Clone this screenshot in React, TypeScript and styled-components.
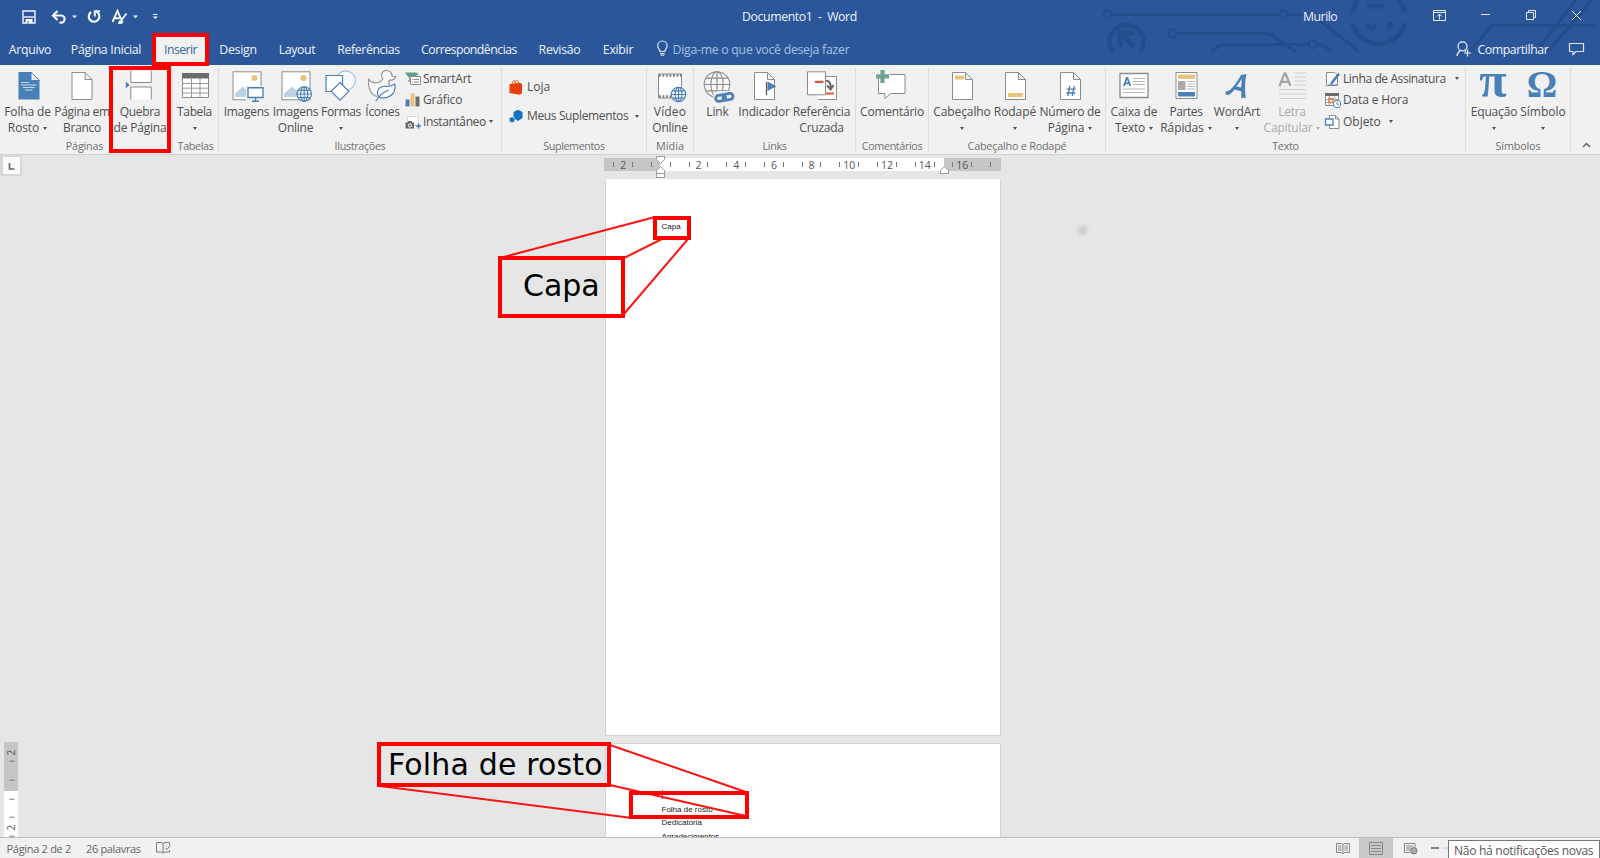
import React from "react";
import styled, { createGlobalStyle } from "styled-components";

const UI = `"Open Sans", "Noto Sans", sans-serif`;
const BLUE = "#2b579a";
const ACCENT = "#4a80b8";
const GRAY = "#8c8c8c";
const GOLD = "#e9c37c";
const RED = "#ff0000";

/* Letter spacing per caption, in px */
const tracking: Record<string, number> = {
  "Arquivo": -0.32, "Página Inicial": -0.31, "Inserir": -0.59, "Design": -0.29, "Layout": -0.41,
  "Referências": -0.4, "Correspondências": -0.52, "Revisão": -0.29, "Exibir": -0.29,
  "Diga-me o que você deseja fazer": -0.27, "Documento1 \u00a0-\u00a0 Word": -0.4, "Murilo": -0.5, "Compartilhar": -0.43,
  "Folha de": -0.15, "Rosto": -0.11, "Página em": -0.32, "Branco": -0.31, "Quebra": -0.34, "de Página": -0.21,
  "Tabela": -0.38, "Imagens": -0.26, "Online": -0.26, "Formas": -0.34, "Ícones": -0.31, "SmartArt": -0.25,
  "Gráfico": -0.15, "Instantâneo": -0.38, "Loja": 0.03, "Meus Suplementos": -0.37, "Vídeo": 0.16, "Link": -0.16,
  "Indicador": -0.18, "Referência": -0.21, "Cruzada": -0.26, "Comentário": -0.23, "Cabeçalho": -0.11, "Rodapé": -0.07,
  "Número de": -0.31, "Página": -0.19, "Caixa de": -0.08, "Texto": -0.26, "Partes": -0.45, "Rápidas": -0.12,
  "WordArt": -0.14, "Letra": -0.31, "Capitular": -0.23, "Linha de Assinatura": -0.4, "Data e Hora": -0.15,
  "Objeto": -0.02, "Equação": -0.15, "Símbolo": 0,
  "Páginas": -0.22, "Tabelas": -0.38, "Ilustrações": -0.35, "Suplementos": -0.44, "Mídia": 0.01, "Links": -0.4,
  "Comentários": -0.39, "Cabeçalho e Rodapé": -0.21, "Símbolos": -0.16,
  "Página 2 de 2": -0.3, "26 palavras": -0.34, "Não há notificações novas": -0.27,
};

const Global = createGlobalStyle`
  body { margin: 0; overflow: hidden; font-family: ${UI}; }
  svg { display: block; overflow: visible; flex: none; }
`;

const Screen = styled.div`
  position: relative;
  display: flex;
  flex-direction: column;
  width: 1600px;
  height: 858px;
  overflow: hidden;
  background: #e6e6e6;
`;

const Text = styled.span<{ $ls: number; $size?: number }>`
  font-size: ${(p) => p.$size ?? 12}px;
  letter-spacing: ${(p) => p.$ls}px;
  white-space: pre;
`;
const T = ({ children, size }: { children: string; size?: number }) => (
  <Text $ls={tracking[children] ?? 0} $size={size}>{children}</Text>
);

/* ---------- header ---------- */
const Header = styled.header`
  position: relative;
  flex: none;
  height: 65px;
  background: ${BLUE};
  color: #eef3fa;
`;
const Circuit = styled.svg`
  position: absolute;
  left: 1100px;
  top: 0;
`;
const TitleBar = styled.div`
  position: relative;
  display: flex;
  height: 33px;
  align-items: center;
`;
const QuickAccess = styled.div`
  display: flex;
  width: 742px;
  height: 33px;
`;
const TitleText = styled.div<{ $w: number }>`
  width: ${(p) => p.$w}px;
  line-height: 16px;
  margin-top: -2px;
`;
const TabBar = styled.nav`
  position: relative;
  display: flex;
  height: 32px;
  align-items: center;
`;
const Tab = styled.div<{ $w: number; $active?: boolean }>`
  flex: none;
  width: ${(p) => p.$w}px;
  height: 32px;
  line-height: 31px;
  text-align: center;
  white-space: nowrap;
  color: ${(p) => (p.$active ? "#3a659f" : "#eef3fa")};
  background: ${(p) => (p.$active ? "#f1f1f1" : "transparent")};
`;
const TellMe = styled.div`
  display: flex;
  width: 800px;
  gap: 4.5px;
  align-items: center;
  color: #a9c0e2;
`;
const Share = styled.div`
  display: flex;
  gap: 6.5px;
  align-items: center;
`;

/* ---------- ribbon ---------- */
const Ribbon = styled.section`
  display: flex;
  flex: none;
  height: 90px;
  background: #f1f1f1;
  border-bottom: 1px solid #d2d2d2;
  box-sizing: border-box;
  color: #4f4f4f;
`;
const Group = styled.div<{ $w: number }>`
  flex: none;
  display: flex;
  flex-direction: column;
  justify-content: space-between;
  box-sizing: border-box;
  width: ${(p) => p.$w}px;
  height: 83px;
  margin-top: 3px;
  border-right: 1px solid #dcdcdc;
`;
const Commands = styled.div<{ $pad?: number }>`
  display: flex;
  height: 68px;
  padding-left: ${(p) => p.$pad ?? 0}px;
`;
const GroupName = styled.div<{ $shift?: number }>`
  height: 15px;
  line-height: 16px;
  text-align: center;
  color: #707070;
  margin-right: ${(p) => p.$shift ?? 0}px;
`;
const Button = styled.div<{ $w: number; $off?: boolean }>`
  flex: none;
  display: flex;
  flex-direction: column;
  align-items: center;
  width: ${(p) => p.$w}px;
  padding-top: 1px;
  color: ${(p) => (p.$off ? "#ababab" : "inherit")};
`;
const Icon = styled.svg.attrs({ width: 32, height: 32, viewBox: "0 0 32 32", fill: "none" })`
  margin-bottom: 3px;
`;
const Glyph = styled.text`
  font-family: "Liberation Serif", "Times New Roman", serif;
  font-weight: bold;
  fill: ${ACCENT};
  text-anchor: middle;
`;
const ButtonLine = styled.div`
  display: flex;
  align-items: center;
  justify-content: center;
  gap: 4px;
  height: 16px;
  line-height: 16px;
  white-space: nowrap;
`;
const Caret = styled.i<{ $ml?: number }>`
  width: 0;
  height: 0;
  margin-left: ${(p) => p.$ml ?? 0}px;
  border: 2.5px solid transparent;
  border-top: 3px solid currentColor;
  border-bottom: 0;
`;
const SmallList = styled.div<{ $gap?: number; $top?: number; $ml?: number }>`
  display: flex;
  flex-direction: column;
  gap: ${(p) => p.$gap ?? 0}px;
  padding-top: ${(p) => p.$top ?? 0}px;
  margin-left: ${(p) => p.$ml ?? 0}px;
`;
const SmallRow = styled.div`
  display: flex;
  align-items: center;
  gap: 2px;
  height: 21.5px;
  line-height: 16px;
`;
const SmallIcon = styled.svg.attrs({ width: 16, height: 16, viewBox: "0 0 16 16", fill: "none" })``;
const Collapse = styled.div`
  display: flex;
  align-items: flex-end;
  padding: 0 0 6px 11px;
`;

const Btn = ({ w, a, b, drop, off, children }: {
  w: number; a: string; b?: string; drop?: boolean; off?: boolean; children: React.ReactNode;
}) => (
  <Button $w={w} $off={off}>
    <Icon>{children}</Icon>
    <ButtonLine><T>{a}</T></ButtonLine>
    <ButtonLine>{b && <T>{b}</T>}{drop && <Caret />}</ButtonLine>
  </Button>
);

const Globe = ({ x, y, r, c }: { x: number; y: number; r: number; c: string }) => (
  <g stroke={c} strokeWidth="1.1">
    <circle cx={x} cy={y} r={r} fill="#f6f6f6" />
    <ellipse cx={x} cy={y} rx={r * 0.48} ry={r} />
    <path d={`M${x} ${y - r}v${2 * r}M${x - r} ${y}h${2 * r}M${x - r * 0.85} ${y - r * 0.5}h${r * 1.7}M${x - r * 0.85} ${y + r * 0.5}h${r * 1.7}`} />
  </g>
);
const Photo = () => (
  <>
    <rect x="2" y="2.8" width="28" height="28" fill="#fff" stroke={GRAY} />
    <circle cx="23.5" cy="9" r="3" fill={GOLD} />
    <path d="M4 28V24.5L12 17.5L21 26V28Z" fill="#bcd0e6" />
  </>
);
const Sheet = ({ x = 6 }: { x?: number }) => (
  <path d={`M${x} 3.5h13l7 7v20h-20zM${x + 13} 3.5v7h7`} fill="#fff" stroke={GRAY} />
);

/* ---------- workspace ---------- */
const Workspace = styled.main`
  position: relative;
  flex: none;
  display: grid;
  grid-template-columns: 604px 1fr;
  grid-template-rows: 682px;
  height: 682px;
  overflow: hidden;
`;
const LeftSide = styled.div`
  display: flex;
  flex-direction: column;
  justify-content: space-between;
`;
const TabSelector = styled.div`
  box-sizing: border-box;
  width: 22px;
  height: 21px;
  border: 2px solid #d8d8d8;
  border-left-width: 3px;
  background: #fbfbfb;
`;
const VRuler = styled.div`
  display: flex;
  flex-direction: column;
  box-sizing: border-box;
  width: 14px;
  height: 95px;
  padding-top: 5.5px;
  margin-left: 4px;
  overflow: hidden;
  background: linear-gradient(#c6c6c6 49px, #fff 49px);
`;
const VMark = styled.div`
  flex: none;
  display: flex;
  align-items: center;
  justify-content: center;
  height: 9.43px;
  margin-left: 2px;
  font-size: 10px;
  line-height: 9px;
  color: #555;
  transform: rotate(-90deg);
`;
const DocColumn = styled.div`
  display: flex;
  flex-direction: column;
`;
const HRuler = styled.div`
  position: relative;
  display: flex;
  align-items: center;
  box-sizing: border-box;
  width: 397px;
  height: 13px;
  margin-top: 3px;
  padding-left: 5px;
  background: linear-gradient(90deg, #c6c6c6 56px, #fff 56px 340px, #c6c6c6 340px);
`;
const Mark = styled.div`
  flex: none;
  display: flex;
  justify-content: center;
  width: 9.43px;
  font-size: 10.5px;
  line-height: 14px;
  color: #555;
`;
const Tick = styled.i`
  width: 1px;
  height: 5px;
  background: #777;
`;
const Indents = styled.svg`
  position: absolute;
  left: 0;
  top: -2px;
`;
const Page = styled.article<{ $h: number; $top: number; $pad: number }>`
  flex: none;
  box-sizing: border-box;
  width: 396px;
  height: ${(p) => p.$h}px;
  margin: ${(p) => p.$top}px 0 0 1px;
  padding: ${(p) => p.$pad}px 0 0 55.5px;
  background: #fff;
  border: 1px solid #d4d4d4;
  border-top-color: ${(p) => (p.$top > 7 ? "#fff" : "#d4d4d4")};
  font: 8px/13.6px "Liberation Sans", Arial, sans-serif;
  color: #222;
`;

/* ---------- status bar ---------- */
const StatusBar = styled.footer`
  display: flex;
  box-sizing: border-box;
  height: 21px;
  border-top: 1px solid #bdbdbd;
  background: #f1f1f1;
  color: #666;
  line-height: 21px;
`;
const StatusItem = styled.div<{ $w: number; $on?: boolean }>`
  flex: none;
  display: flex;
  align-items: center;
  justify-content: ${(p) => (p.$on === undefined ? "flex-start" : "center")};
  width: ${(p) => p.$w}px;
  height: 20px;
  background: ${(p) => (p.$on ? "#c9c9c9" : "transparent")};
`;
const Tooltip = styled.div`
  position: absolute;
  left: 1448px;
  top: 840px;
  box-sizing: border-box;
  width: 152px;
  height: 18px;
  padding-left: 5px;
  border: 1px solid #767676;
  border-bottom: 0;
  background: #fff;
  color: #575757;
  line-height: 16px;
`;

/* ---------- annotations drawn over the window ---------- */
const Frame = styled.div<{ $x: number; $y: number; $w: number; $h: number }>`
  position: absolute;
  left: ${(p) => p.$x}px;
  top: ${(p) => p.$y}px;
  box-sizing: border-box;
  width: ${(p) => p.$w}px;
  height: ${(p) => p.$h}px;
  border: 4px solid ${RED};
`;
const Callout = styled(Frame)<{ $in: number; $up?: number; $ls?: number }>`
  display: flex;
  align-items: center;
  padding: 0 0 ${(p) => p.$up ?? 0}px ${(p) => p.$in}px;
  font: 30px/1 "DejaVu Sans", Verdana, sans-serif;
  letter-spacing: ${(p) => p.$ls ?? 0}px;
  color: #000;
  white-space: nowrap;
`;
const Leaders = styled.svg`
  position: absolute;
  left: 0;
  top: 0;
`;
const Smudge = styled.div`
  position: absolute;
  left: 1078px;
  top: 226px;
  width: 9px;
  height: 9px;
  border-radius: 50%;
  background: #c9c9c9;
  filter: blur(2px);
`;

const hMarks = Array.from({ length: 41 }, (_, i) => i - 5);
const vMarks = Array.from({ length: 10 }, (_, i) => i - 4);

export default function App() {
  return (
    <Screen>
      <Global />
      <Header>
        <Circuit width="500" height="52" viewBox="0 0 500 52" fill="none" stroke="#244e8b" strokeWidth="3">
          <circle cx="7.5" cy="14.5" r="4" strokeWidth="2" />
          <path d="M11.500 14.500H179.500M187.500 14.500H212L259 51.500" />
          <circle cx="183.500" cy="14.500" r="4" strokeWidth="2" />
          <path d="M13 52A17 17 0 1 1 40 52" strokeWidth="4.500" />
          <path d="M20 47V33H34M21 34L34 47" strokeWidth="5" />
          <circle cx="72.500" cy="33.500" r="4" strokeWidth="2" />
          <path d="M76.500 33.500H169L196 51.500M111 51.500L122 44.500H208M216 44.500H222L232 51.500" />
          <circle cx="212.500" cy="44.500" r="4" strokeWidth="2" />
          <path d="M258 0A27 27 0 0 0 252.500 13M252.500 23A27 27 0 0 0 305 23M304.500 12A27 27 0 0 0 299 0" strokeWidth="5" />
          <path d="M267 6H284" strokeWidth="5" />
          <path d="M265 26l4-2l3 2l4-3h3l-6 8h-3zM287 22h6v7h-6z" fill="#244e8b" stroke="none" />
          <path d="M370 51.500L392 25.500H496M436 51.500L476 0M448 51.500L492 0" />
        </Circuit>
        <TitleBar>
          <QuickAccess>
            <svg width="170" height="33" viewBox="0 0 170 33" fill="none" stroke="#f4f7fb">
              <path d="M23 11h12v12h-12z" strokeWidth="1.400" />
              <path d="M23.500 17h11" strokeWidth="1.400" />
              <path d="M25.500 19h7v4h-7z" fill="#f4f7fb" stroke="none" />
              <path d="M28 21v2.500" stroke={BLUE} />
              <path d="M53 15.500H61a3.600 3.600 0 0 1 0 7.200h-1.500" strokeWidth="2.200" />
              <path d="M57.500 11L53 15.500L57.500 20" strokeWidth="2.200" />
              <path d="M72 15.500h5l-2.500 2.800zM133 15.500h5l-2.500 2.800z" fill="#f4f7fb" stroke="none" />
              <path d="M91.200 12A5.300 5.300 0 1 0 96.200 11.600" strokeWidth="2.200" />
              <path d="M100 11.300H94.800V16.500" strokeWidth="2" />
              <path d="M112.500 22L117.500 10.800L121 19M114 18.300h5.500" strokeWidth="1.900" />
              <path d="M126.500 13.500l-5 6.500" strokeWidth="1.800" />
              <path d="M121.500 19.500q-3 0-3.500 4.500q5 .5 5.500-2.500z" fill="#f4f7fb" stroke="none" />
              <path d="M153 14.500h4.500" />
              <path d="M152.800 16.500h5l-2.500 2.600z" fill="#f4f7fb" stroke="none" />
            </svg>
          </QuickAccess>
          <TitleText $w={561}><T size={12.3}>{"Documento1 \u00a0-\u00a0 Word"}</T></TitleText>
          <TitleText $w={127}><T size={12.3}>Murilo</T></TitleText>
          <svg width="160" height="33" viewBox="1430 0 160 33" fill="none" stroke="#e4ebf5">
            <path d="M1433.500 10.500h12v10h-12zM1433.500 12.500h12M1439.500 19.500v-5M1437 16.500l2.500-2.500l2.500 2.500" />
            <path d="M1481 14.500h9" />
            <path d="M1526.500 12.500h7v7h-7zM1528.500 12.500v-2h7v7h-2" />
            <path d="M1572 11l9 9M1581 11l-9 9" />
          </svg>
        </TitleBar>
        <TabBar>
          <Tab $w={60}><T size={12.3}>Arquivo</T></Tab>
          <Tab $w={92}><T size={12.3}>Página Inicial</T></Tab>
          <Tab $w={57} $active><T size={12.3}>Inserir</T></Tab>
          <Tab $w={58}><T size={12.3}>Design</T></Tab>
          <Tab $w={60}><T size={12.3}>Layout</T></Tab>
          <Tab $w={83}><T size={12.3}>Referências</T></Tab>
          <Tab $w={118}><T size={12.3}>Correspondências</T></Tab>
          <Tab $w={63}><T size={12.3}>Revisão</T></Tab>
          <Tab $w={54}><T size={12.3}>Exibir</T></Tab>
          <TellMe>
            <svg width="23" height="18" viewBox="0 0 23 18" fill="none" stroke="#dbe5f3" strokeWidth="1.200">
              <path d="M15 11.500c0-2-2.300-3-2.300-5.800a4.700 4.700 0 0 1 9.400 0c0 2.800-2.300 3.800-2.300 5.800z" />
              <path d="M15 13.500h4.800M15.500 15.200h3.800" />
            </svg>
            <T size={12.3}>Diga-me o que você deseja fazer</T>
          </TellMe>
          <Share>
            <svg width="26" height="18" viewBox="0 0 26 18" fill="none" stroke="#eef3fa" strokeWidth="1.200">
              <circle cx="17.500" cy="6.300" r="4.500" />
              <path d="M12 16c.3-3 1.800-4.500 3.500-5.500M19.500 10.500l1.500 1M22.500 9.500v7M19 13h7" />
            </svg>
            <T size={12.3}>Compartilhar</T>
            <svg width="32" height="16" viewBox="0 0 32 16" fill="none" stroke="#dbe5f3" strokeWidth="1.200">
              <path d="M14.500 2.500h14v8h-7.500l-3 3v-3h-3.500z" />
            </svg>
          </Share>
        </TabBar>
      </Header>

      <Ribbon>
        <Group $w={173}>
          <Commands>
            <Btn w={55} a="Folha de" b="Rosto" drop>
              <path d="M6.500 3h12.500l8.500 8.500v19h-21z" fill={ACCENT} />
              <path d="M19 3v8.500h8.500z" fill="#e8f0f8" stroke={ACCENT} />
              <path d="M9 13.500h8M9 16h15.500M11 18.500h11.500M13 21h7.500" stroke="#c9dcef" />
            </Btn>
            <Btn w={54} a="Página em" b="Branco"><Sheet /></Btn>
            <Btn w={62} a="Quebra" b="de Página">
              <path d="M6.800 1.500v12h20.500v-12" fill="#fff" stroke={GRAY} />
              <path d="M6.800 30.500v-12.500h20.500v12.500" fill="#fff" stroke={GRAY} />
              <path d="M1.800 12.800l4 3.200l-4 3.200z" fill={ACCENT} />
            </Btn>
          </Commands>
          <GroupName $shift={3}><T size={10.8}>Páginas</T></GroupName>
        </Group>
        <Group $w={46}>
          <Commands>
            <Btn w={43} a="Tabela" drop>
              <path d="M3.500 5h26v23.500h-26z" fill="#fff" stroke={GRAY} />
              <path d="M3 4h27v5.500h-27z" fill="#6b6b6b" />
              <path d="M12.500 9v19M21 9v19M4 14.500h25M4 19.200h25M4 24h25" stroke="#9a9a9a" />
            </Btn>
          </Commands>
          <GroupName><T size={10.8}>Tabelas</T></GroupName>
        </Group>
        <Group $w={283}>
          <Commands $pad={3}>
            <Btn w={49} a="Imagens">
              <Photo />
              <path d="M15 17h18v15h-18z" fill="#f1f1f1" />
              <path d="M17 18.700h15v9.800h-15z" fill="#fff" stroke={ACCENT} strokeWidth="1.400" />
              <path d="M24.500 29v3M21 32.200h7" stroke={ACCENT} strokeWidth="1.400" />
            </Btn>
            <Btn w={49} a="Imagens" b="Online">
              <Photo />
              <Globe x={24.200} y={25} r={7.300} c={ACCENT} />
            </Btn>
            <Btn w={42} a="Formas" drop>
              <circle cx="20.700" cy="11.500" r="9.700" fill="#f8f8f8" stroke="#a9c2e0" strokeWidth="1.200" />
              <path d="M1 6.500h16.500v16h-16.500z" fill="#fff" stroke={ACCENT} strokeWidth="1.200" />
              <path d="M15 13.500l8.800 8.800l-8.800 8.800l-8.800-8.800z" fill="#fff" stroke={ACCENT} strokeWidth="1.200" />
            </Btn>
            <Btn w={41} a="Ícones">
              <path d="M10 27.500C4 25.500 .5 19 1.700 10.300C4 14 9 14.800 13.500 12.500L15.800 10C13 6 15 1.500 19.500 1.500C23 1.500 25.200 4 25 7.300L28.500 7.500C28.300 10.500 25 11.500 22.500 11C21 13 21.500 14 22.500 16" fill="#f8f8f8" stroke={GRAY} strokeWidth="1.100" />
              <path d="M12 28.300C8 22 12.500 16.800 19 17.300C22 17.500 25 17 27.800 15.300C29.500 25.500 21 30.500 12 28.300Z" fill="#f8fafc" stroke={ACCENT} strokeWidth="1.200" />
              <path d="M8.800 32C11.500 27.500 16 23.500 21.500 21" stroke={ACCENT} strokeWidth="1.200" />
            </Btn>
            <SmallList $ml={2}>
              <SmallRow>
                <SmallIcon>
                  <path d="M0 1.500h11.500l2.500 2.500h-3l2 1.500H5v5H2.500L5 7.500L2.500 5z" fill="#5f9f88" />
                  <path d="M5.500 5.500h10v8h-10z" fill="#fff" stroke={GRAY} />
                  <path d="M8.500 8.500h5.500M8.500 11h5.500M7 8.500h.8M7 11h.8" stroke={GRAY} />
                </SmallIcon>
                <T>SmartArt</T>
              </SmallRow>
              <SmallRow>
                <SmallIcon>
                  <path d="M.5 7.500h4v7h-4z" fill={ACCENT} />
                  <path d="M5.500 1.500h4v13h-4z" fill={GOLD} />
                  <path d="M10.500 4.500h4v10h-4z" fill="#6d6d6d" />
                </SmallIcon>
                <T>Gráfico</T>
              </SmallRow>
              <SmallRow>
                <SmallIcon>
                  <path d="M2.500 2.500h11v9h-11z" fill="#fff" stroke="#a5a5a5" strokeDasharray="1 1.500" />
                  <path d="M.5 8.500h2l1-1.500h3l1 1.500h1.500v6h-8.500z" fill="#686868" />
                  <circle cx="5" cy="11.500" r="1.600" stroke="#fff" />
                  <path d="M13.500 9.500v5M11 12h5" stroke={ACCENT} strokeWidth="1.600" />
                </SmallIcon>
                <T>Instantâneo</T>
                <Caret $ml={1} />
              </SmallRow>
            </SmallList>
          </Commands>
          <GroupName><T size={10.8}>Ilustrações</T></GroupName>
        </Group>
        <Group $w={145}>
          <Commands $pad={7}>
            <SmallList $gap={8} $top={8}>
              <SmallRow>
                <SmallIcon>
                  <path d="M.5 5l10-1.200l2.500 1v9.500l-2.500 1.400l-10-1.700z" fill="#e8400c" />
                  <path d="M3.500 4.500c0-4 3-4 3-.5M6 4c0-3.500 3.500-3.500 3.500 0" stroke="#e8672f" />
                </SmallIcon>
                <T>Loja</T>
              </SmallRow>
              <SmallRow>
                <SmallIcon>
                  <path d="M4.500 4l4.500-2.200l4.500 2.200v6l-4.500 3l-4.500-3z" fill="#1272c4" />
                  <circle cx="3" cy="11.800" r="2.900" fill="#1272c4" stroke="#f1f1f1" strokeWidth=".6" />
                </SmallIcon>
                <T>Meus Suplementos</T>
                <Caret $ml={5} />
              </SmallRow>
            </SmallList>
          </Commands>
          <GroupName><T size={10.8}>Suplementos</T></GroupName>
        </Group>
        <Group $w={47}>
          <Commands>
            <Btn w={46} a="Vídeo" b="Online">
              <path d="M4.500 5h23v24h-23z" fill="#fff" stroke={GRAY} />
              <path d="M5 6.500h23M5 27.500h23" stroke="#7a7a7a" strokeWidth="2.600" strokeDasharray="1.800 1.700" />
              <Globe x={24.500} y={25.500} r={7.200} c={ACCENT} />
            </Btn>
          </Commands>
          <GroupName><T size={10.8}>Mídia</T></GroupName>
        </Group>
        <Group $w={162}>
          <Commands $pad={6}>
            <Btn w={35} a="Link">
              <Globe x={15} y={15.500} r={12.800} c={GRAY} />
              <g stroke="#f1f1f1" strokeWidth="6"><rect x="14" y="25" width="10" height="5.500" rx="2.700" /><rect x="21" y="25" width="10" height="5.500" rx="2.700" /></g>
              <g stroke={ACCENT} strokeWidth="2.800" transform="rotate(-10 23 28)"><rect x="13.500" y="25.300" width="10" height="6" rx="3" /><rect x="21" y="25.300" width="10" height="6" rx="3" /></g>
            </Btn>
            <Btn w={58} a="Indicador">
              <Sheet x={6.500} />
              <path d="M18.500 13v13" stroke="#5c5c5c" strokeWidth="1.300" />
              <path d="M19.500 12.500l9 4.700l-9 4.800z" fill={ACCENT} />
            </Btn>
            <Btn w={57} a="Referência" b="Cruzada">
              <path d="M14 7.500h16.500v23h-18.500" fill="#fff" stroke={GRAY} />
              <path d="M1.500 2.800h18v23h-18z" fill="#fff" stroke={GRAY} />
              <path d="M9 12.800h8.500M20 24.500h8" stroke="#d8583c" strokeWidth="2.200" />
              <path d="M19.500 11.500c4 0 5.500 3 5.200 8M21 16.500l3.700 4l3-4.500" stroke="#666" strokeWidth="2" />
            </Btn>
          </Commands>
          <GroupName><T size={10.8}>Links</T></GroupName>
        </Group>
        <Group $w={73}>
          <Commands>
            <Btn w={72} a="Comentário">
              <path d="M2.500 5.500h26.500v19h-14.500l-5.500 5v-5h-6.500z" fill="#fff" stroke={GRAY} />
              <path d="M-1 8h15v-8h-8z" fill="#f1f1f1" opacity=".6" />
              <path d="M6.500 1v13M0 7.500h13" stroke="#6fa58f" strokeWidth="4.200" />
            </Btn>
          </Commands>
          <GroupName><T size={10.8}>Comentários</T></GroupName>
        </Group>
        <Group $w={177}>
          <Commands $pad={3}>
            <Btn w={60} a="Cabeçalho" drop><Sheet x={6.500} /><path d="M9 6.500h9v4h-9z" fill={GOLD} /></Btn>
            <Btn w={46} a="Rodapé" drop><Sheet x={6.500} /><path d="M9 24h15v4h-15z" fill={GOLD} /></Btn>
            <Btn w={64} a="Número de" b="Página" drop>
              <Sheet x={6.500} />
              <path d="M15.800 17l-2 10M20.300 17l-2 10M12.800 20.200h9M12.300 24h9" stroke={ACCENT} strokeWidth="1.300" />
            </Btn>
          </Commands>
          <GroupName><T size={10.8}>Cabeçalho e Rodapé</T></GroupName>
        </Group>
        <Group $w={360}>
          <Commands $pad={3}>
            <Btn w={50} a="Caixa de" b="Texto" drop>
              <path d="M2 4.500h28v24h-28z" fill="#fff" stroke={GRAY} strokeWidth="1.300" />
              <path d="M5.800 17l3-8h.6l3 8M7 14.300h4.300" stroke={ACCENT} strokeWidth="1.800" />
              <path d="M15 9.500h12M15 12.500h12M15 15.500h12M5 20h22M5 23.500h22" stroke="#b5b5b5" />
            </Btn>
            <Btn w={54} a="Partes" b="Rápidas" drop>
              <path d="M6 3.500h21v26h-21z" fill="#fff" stroke={GRAY} />
              <path d="M8 5.500h17v4.500h-17z" fill={GOLD} />
              <path d="M8 12h7.500v9h-7.500z" fill="#a9a9a9" />
              <path d="M17 12.500h8M17 15h8M17 17.500h8M17 20h8" stroke="#bbb" />
              <path d="M8 23h17v4.500h-17z" fill={ACCENT} />
            </Btn>
            <Btn w={48} a="WordArt" drop>
              <path d="M4.500 22.500C10 23 16 13 20 6L25.500 5C23.800 12 23.800 22 24.800 28.800L20.300 29L20.200 22.300L13.500 20.600C10.500 24.500 8 27 4.800 25.500ZM15.500 17.500L20.200 18.600L20.800 9.800Z" fill={ACCENT} fillRule="evenodd" />
            </Btn>
            <Btn w={62} a="Letra" b="Capitular" drop off>
              <path d="M3.500 17l5-12.500h1l5 12.500M5.500 12.800h7" stroke="#a6a6a6" strokeWidth="2.300" />
              <path d="M18 4h12M18 8h12M18 12h12M18 16h12M3 20.500h27M3 25h27M3 29.500h27" stroke="#cfcfcf" strokeWidth="1.200" />
            </Btn>
            <SmallList $ml={2}>
              <SmallRow>
                <SmallIcon>
                  <path d="M1.500 1.500h8l3 3v10h-11z" fill="#fff" stroke={GRAY} />
                  <path d="M15 3.500l-7 9l-3 1.500l.8-3l7.200-9z" fill={ACCENT} />
                  <path d="M3 14h9" stroke={ACCENT} />
                </SmallIcon>
                <T>Linha de Assinatura</T>
                <Caret $ml={7} />
              </SmallRow>
              <SmallRow>
                <SmallIcon>
                  <path d="M.5 1.500h13v12h-13z" fill="#fff" stroke={GRAY} />
                  <path d="M0 1h14v3h-14z" fill="#6b6b6b" />
                  <path d="M1 7.500h12M1 10.500h12M4 4v9M10 4v9" stroke="#b0b0b0" />
                  <path d="M4 6.500h4v4h-4z" stroke="#e07b3c" strokeWidth="1.400" />
                  <circle cx="12" cy="12" r="3.700" fill="#fff" stroke={ACCENT} />
                  <path d="M12 10v2.300h1.800" stroke={ACCENT} />
                </SmallIcon>
                <T>Data e Hora</T>
              </SmallRow>
              <SmallRow>
                <SmallIcon>
                  <path d="M4.500 1.500h6l3.500 3.500v9.500h-9.500zM10.500 1.500v3.500h3.500" fill="#fff" stroke={GRAY} />
                  <path d="M.5 5h7.500v6h-7.500z" fill="#fff" stroke={ACCENT} strokeWidth="1.300" />
                </SmallIcon>
                <T>Objeto</T>
                <Caret $ml={6} />
              </SmallRow>
            </SmallList>
          </Commands>
          <GroupName><T size={10.8}>Texto</T></GroupName>
        </Group>
        <Group $w={105}>
          <Commands $pad={3}>
            <Btn w={50} a="Equação" drop><Glyph x="15" y="28" fontSize="50">π</Glyph></Btn>
            <Btn w={48} a="Símbolo" drop><Glyph x="15" y="28" fontSize="38">Ω</Glyph></Btn>
          </Commands>
          <GroupName><T size={10.8}>Símbolos</T></GroupName>
        </Group>
        <Collapse>
          <svg width="9" height="6" viewBox="0 0 9 6" fill="none" stroke="#666" strokeWidth="1.500"><path d="M1 5l3.500-3.500l3.500 3.500" /></svg>
        </Collapse>
      </Ribbon>

      <Workspace>
        <LeftSide>
          <TabSelector>
            <svg width="16" height="16" viewBox="0 0 16 16" fill="none" stroke="#666" strokeWidth="1.600"><path d="M6.500 6v6h5" /></svg>
          </TabSelector>
          <VRuler>
            {vMarks.map((h) => <VMark key={h}>{h % 2 !== 0 ? <Tick /> : h % 4 === 0 && h !== 0 ? "2" : null}</VMark>)}
          </VRuler>
        </LeftSide>
        <DocColumn>
          <HRuler>
            {hMarks.map((h) => (
              <Mark key={h}>{h % 2 !== 0 ? <Tick /> : h % 4 === 0 && h !== 0 ? Math.abs(h / 2) : null}</Mark>
            ))}
            <Indents width="397" height="24" viewBox="0 0 397 24" fill="#fff" stroke="#999">
              <path d="M52.500 .5h8v3l-4 4l-4-4zM52.500 17.500v-3l4-4l4 4v3zM52.500 17.500h8v4h-8z" />
              <path d="M336.500 17.500v-3l4-4l4 4v3z" />
            </Indents>
          </HRuler>
          <Page $h={557} $top={8} $pad={40}>Capa</Page>
          <Page $h={110} $top={7} $pad={58.500}>Folha de rosto<br />Dedicatória<br />Agradecimentos</Page>
        </DocColumn>
      </Workspace>

      <StatusBar>
        <StatusItem $w={6.500} />
        <StatusItem $w={79.500}><T size={11}>Página 2 de 2</T></StatusItem>
        <StatusItem $w={70}><T size={11}>26 palavras</T></StatusItem>
        <StatusItem $w={1170}>
          <svg width="16" height="14" viewBox="0 0 16 14" fill="none" stroke="#7d7d7d">
            <path d="M.5 1.500h4.500l2 1v9.500l-2-1h-4.500zM7 2.500l2-1h4.500v2.500M7 12l2-1h4.500v-2M9 6.500l2 2l3.500-4.500" />
          </svg>
        </StatusItem>
        <StatusItem $w={33} $on={false}>
          <svg width="14" height="13" viewBox="0 0 14 13" fill="none" stroke="#888">
            <path d="M.5 1.500h5l1.500 1l1.500-1h5v9h-5l-1.500 1.500l-1.500-1.500h-5zM7 2.500v9M2 4h3.500M2 6h3.500M2 8h3.500M8.500 4h3.500M8.500 6h3.500M8.500 8h3.500" />
          </svg>
        </StatusItem>
        <StatusItem $w={34} $on>
          <svg width="14" height="13" viewBox="0 0 14 13" fill="none" stroke="#858585">
            <path d="M.5 .5h13v12h-13zM2 3.500h10M2 6.500h10M2 9.500h10" />
          </svg>
        </StatusItem>
        <StatusItem $w={36} $on={false}>
          <svg width="14" height="13" viewBox="0 0 14 13" fill="none" stroke="#888">
            <path d="M6 10.500h-5.500v-9h10.500v4M2 4h7M2 6h5M2 8h4" />
            <circle cx="9.800" cy="8.800" r="3.200" fill="#aaa" stroke="#777" />
          </svg>
        </StatusItem>
        <StatusItem $w={20}>
          <svg width="20" height="6" viewBox="0 0 20 6" fill="none"><path d="M2 3h8" stroke="#777" strokeWidth="1.800" /><path d="M13 3h7" stroke="#ccc" /></svg>
        </StatusItem>
      </StatusBar>
      <Tooltip><T>Não há notificações novas</T></Tooltip>

      <Smudge />
      <Leaders width="1600" height="858" viewBox="0 0 1600 858" fill="none" stroke="#fb1414" strokeWidth="2">
        <path d="M500 258L655 217M624 258L662 239M624 314L688 239" />
        <path d="M610 745L746 792M610 785L746 816M380 786L632 818" />
        <path d="M662.500 790v9" stroke="#555" strokeWidth="1" />
      </Leaders>
      <Frame $x={152} $y={33} $w={57} $h={33} />
      <Frame $x={109} $y={66} $w={62} $h={87} />
      <Frame $x={653} $y={216} $w={38} $h={24} />
      <Frame $x={629} $y={791} $w={120} $h={28} />
      <Callout $x={498} $y={256} $w={127} $h={62} $in={21} $up={2}>Capa</Callout>
      <Callout $x={377} $y={742} $w={234} $h={45} $in={7} $ls={0.15}>Folha de rosto</Callout>
    </Screen>
  );
}
